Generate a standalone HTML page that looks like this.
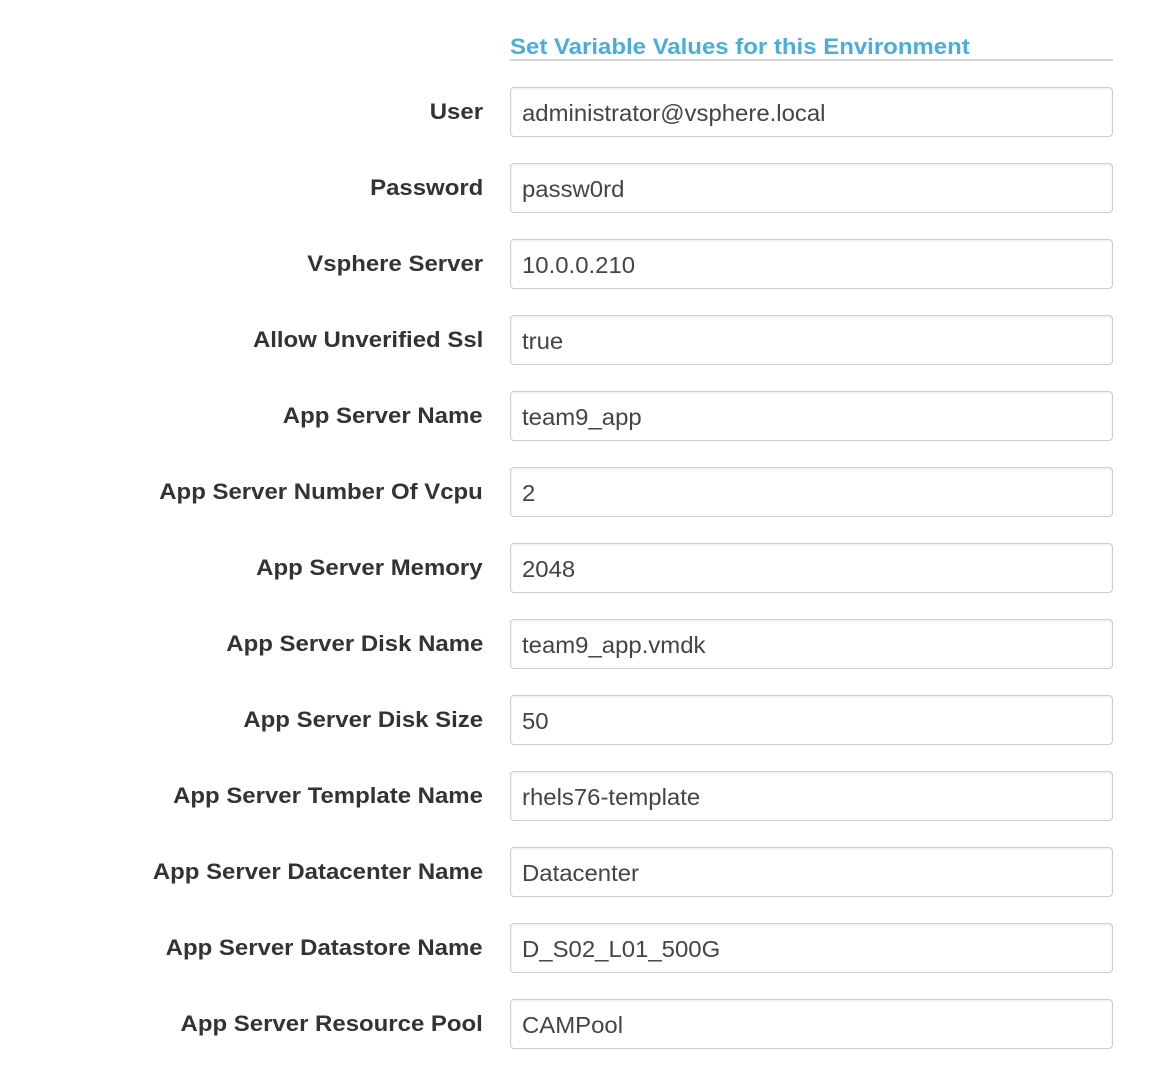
<!DOCTYPE html>
<html><head><style>
body{margin:0;background:#fff;font-family:"Liberation Sans",sans-serif;width:1160px;height:1066px;overflow:hidden;position:relative}
.h{position:absolute;left:510px;top:34px;width:603px;height:25px;border-bottom:2px solid #d5d5d5;color:#4aaed8;font-weight:bold;font-size:22px;line-height:26px}
.h span{display:inline-block;transform:scaleX(1.09);transform-origin:left}
.l{position:absolute;right:677px;font-weight:bold;font-size:22.5px;color:#333;line-height:50px;white-space:nowrap;transform:scaleX(1.065);transform-origin:right}
.i{position:absolute;left:510px;height:48px;border:1px solid #ccc;border-radius:4px;box-shadow:inset 0 1px 2px rgba(0,0,0,.08);font-size:23px;color:#444;line-height:50px;padding-left:11px;box-sizing:content-box;width:590px}
.i span{display:inline-block;transform:scaleX(1.04);transform-origin:left}
</style></head><body>
<div class="h"><span>Set Variable Values for this Environment</span></div>
<div class="l" style="top:87px">User</div><div class="i" style="top:87px"><span>administrator@vsphere.local</span></div>
<div class="l" style="top:163px">Password</div><div class="i" style="top:163px"><span>passw0rd</span></div>
<div class="l" style="top:239px">Vsphere Server</div><div class="i" style="top:239px"><span>10.0.0.210</span></div>
<div class="l" style="top:315px">Allow Unverified Ssl</div><div class="i" style="top:315px"><span>true</span></div>
<div class="l" style="top:391px">App Server Name</div><div class="i" style="top:391px"><span>team9_app</span></div>
<div class="l" style="top:467px">App Server Number Of Vcpu</div><div class="i" style="top:467px"><span>2</span></div>
<div class="l" style="top:543px">App Server Memory</div><div class="i" style="top:543px"><span>2048</span></div>
<div class="l" style="top:619px">App Server Disk Name</div><div class="i" style="top:619px"><span>team9_app.vmdk</span></div>
<div class="l" style="top:695px">App Server Disk Size</div><div class="i" style="top:695px"><span>50</span></div>
<div class="l" style="top:771px">App Server Template Name</div><div class="i" style="top:771px"><span>rhels76-template</span></div>
<div class="l" style="top:847px">App Server Datacenter Name</div><div class="i" style="top:847px"><span>Datacenter</span></div>
<div class="l" style="top:923px">App Server Datastore Name</div><div class="i" style="top:923px"><span>D_S02_L01_500G</span></div>
<div class="l" style="top:999px">App Server Resource Pool</div><div class="i" style="top:999px"><span>CAMPool</span></div>
</body></html>
